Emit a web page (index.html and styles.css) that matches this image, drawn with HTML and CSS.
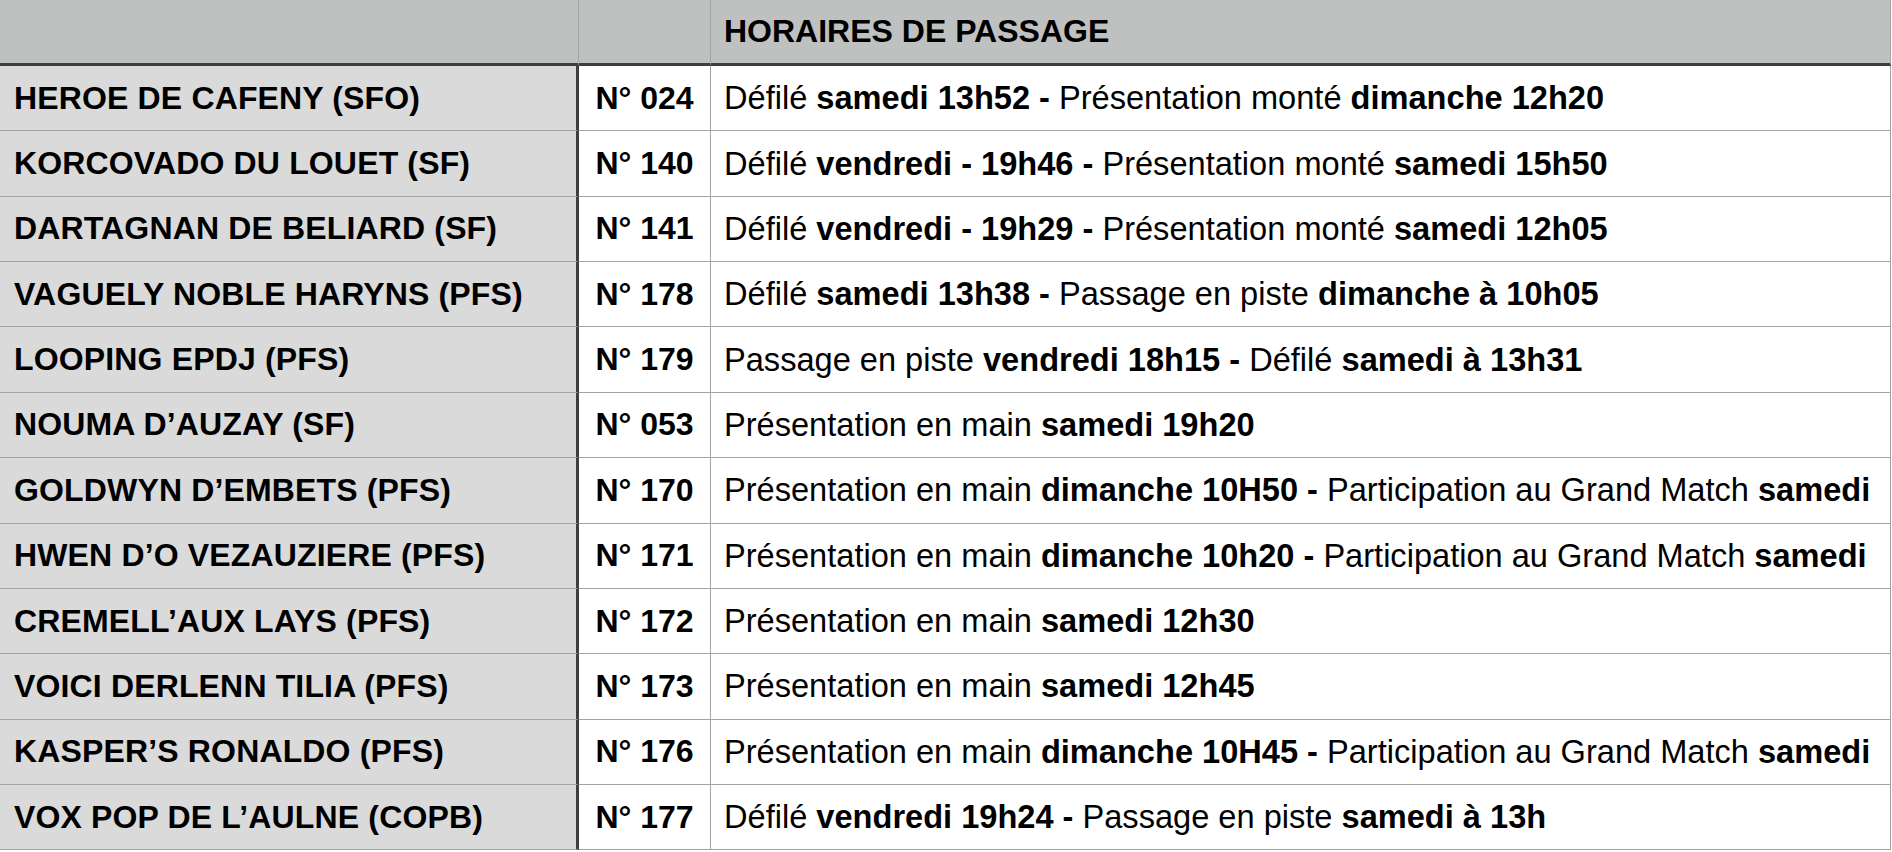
FILE: index.html
```html
<!DOCTYPE html>
<html lang="fr">
<head>
<meta charset="utf-8">
<title>Horaires de passage</title>
<link rel="stylesheet" href="styles.css">
</head>
<body>
<div class="sheet">
  <div class="row head">
    <div class="cell name"></div>
    <div class="cell num"></div>
    <div class="cell info"><span class="txt">HORAIRES DE PASSAGE</span></div>
  </div>
  <div class="row">
    <div class="cell name">HEROE DE CAFENY (SFO)</div>
    <div class="cell num">N° 024</div>
    <div class="cell info"><span class="txt">Défilé <b>samedi 13h52 -</b> Présentation monté <b>dimanche 12h20</b></span></div>
  </div>
  <div class="row">
    <div class="cell name">KORCOVADO DU LOUET (SF)</div>
    <div class="cell num">N° 140</div>
    <div class="cell info"><span class="txt">Défilé <b>vendredi - 19h46 -</b> Présentation monté <b>samedi 15h50</b></span></div>
  </div>
  <div class="row">
    <div class="cell name">DARTAGNAN DE BELIARD (SF)</div>
    <div class="cell num">N° 141</div>
    <div class="cell info"><span class="txt">Défilé <b>vendredi - 19h29 -</b> Présentation monté <b>samedi 12h05</b></span></div>
  </div>
  <div class="row">
    <div class="cell name">VAGUELY NOBLE HARYNS (PFS)</div>
    <div class="cell num">N° 178</div>
    <div class="cell info"><span class="txt">Défilé <b>samedi 13h38 -</b> Passage en piste <b>dimanche à 10h05</b></span></div>
  </div>
  <div class="row">
    <div class="cell name">LOOPING EPDJ (PFS)</div>
    <div class="cell num">N° 179</div>
    <div class="cell info"><span class="txt">Passage en piste <b>vendredi 18h15 -</b> Défilé <b>samedi à 13h31</b></span></div>
  </div>
  <div class="row">
    <div class="cell name">NOUMA D’AUZAY (SF)</div>
    <div class="cell num">N° 053</div>
    <div class="cell info"><span class="txt">Présentation en main <b>samedi 19h20</b></span></div>
  </div>
  <div class="row">
    <div class="cell name">GOLDWYN D’EMBETS (PFS)</div>
    <div class="cell num">N° 170</div>
    <div class="cell info"><span class="txt">Présentation en main <b>dimanche 10H50 -</b> Participation au Grand Match <b>samedi</b></span></div>
  </div>
  <div class="row">
    <div class="cell name">HWEN D’O VEZAUZIERE (PFS)</div>
    <div class="cell num">N° 171</div>
    <div class="cell info"><span class="txt">Présentation en main <b>dimanche 10h20 -</b> Participation au Grand Match <b>samedi</b></span></div>
  </div>
  <div class="row">
    <div class="cell name">CREMELL’AUX LAYS (PFS)</div>
    <div class="cell num">N° 172</div>
    <div class="cell info"><span class="txt">Présentation en main <b>samedi 12h30</b></span></div>
  </div>
  <div class="row">
    <div class="cell name">VOICI DERLENN TILIA (PFS)</div>
    <div class="cell num">N° 173</div>
    <div class="cell info"><span class="txt">Présentation en main <b>samedi 12h45</b></span></div>
  </div>
  <div class="row">
    <div class="cell name">KASPER’S RONALDO (PFS)</div>
    <div class="cell num">N° 176</div>
    <div class="cell info"><span class="txt">Présentation en main <b>dimanche 10H45 -</b> Participation au Grand Match <b>samedi</b></span></div>
  </div>
  <div class="row">
    <div class="cell name">VOX POP DE L’AULNE (COPB)</div>
    <div class="cell num">N° 177</div>
    <div class="cell info"><span class="txt">Défilé <b>vendredi 19h24 -</b> Passage en piste <b>samedi à 13h</b></span></div>
  </div>
</div>
</body>
</html>
```

FILE: styles.css
```css
html, body {
  margin: 0;
  padding: 0;
  background: #ffffff;
}

body {
  font-family: "Liberation Sans", Arial, Helvetica, sans-serif;
  font-size: 32px;
  color: #000000;
  overflow: hidden;
}

.sheet {
  width: 1891px;
  display: flex;
  flex-direction: column;
}

.row {
  display: grid;
  grid-template-columns: 579px 132px 1180px;
  height: 65.36px;
}

.cell {
  box-sizing: border-box;
  display: flex;
  align-items: center;
  white-space: nowrap;
  overflow: hidden;
  border-bottom: 1px solid #a4a4a4;
}

.name {
  background: #dadada;
  font-weight: bold;
  padding-left: 14px;
  border-right: 3px solid #3e3e3e;
  letter-spacing: 0.15px;
}

.num {
  font-weight: bold;
  justify-content: center;
  border-right: 1px solid #a4a4a4;
}

.info {
  padding-left: 13px;
  border-right: 1px solid #a4a4a4;
  font-size: 32.6px;
}

.txt {
  white-space: pre;
}

.txt b {
  font-weight: bold;
}

.head {
  height: 66px;
}

.head .cell {
  background: #bfc1c0;
  border-bottom: 3px solid #3e3e3e;
  font-weight: bold;
  font-size: 32px;
}

.head .name {
  border-right: 1px solid #a4a4a4;
}
```
